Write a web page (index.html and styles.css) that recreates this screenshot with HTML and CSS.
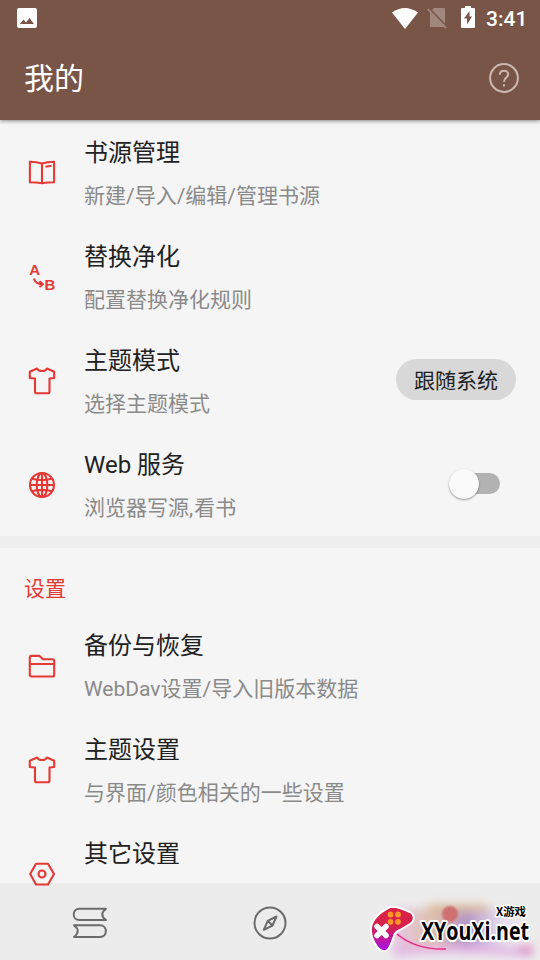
FILE: index.html
```html
<!DOCTYPE html>
<html lang="zh-CN">
<head>
<meta charset="utf-8">
<title>我的</title>
<link rel="stylesheet" href="styles.css">
</head>
<body>
<svg class="defs" width="0" height="0">
  <symbol id="shirt" viewBox="0 0 28 28"><path d="M9 1.500C10.500 4.800 17.500 4.800 19 1.500L26.200 4.800V11L21.500 11.500V24.500Q21.500 26.300 19.700 26.300H8.800Q7 26.300 7 24.500V11.500L1.800 11V4.800Z"/></symbol>
</svg>
<div class="screen">
  <header class="header">
    <div class="status">
      <svg class="photo" width="20" height="20" viewBox="0 0 20 20"><path fill="#fff" fill-rule="evenodd" d="M2 0H18Q20 0 20 2V18Q20 20 18 20H2Q0 20 0 18V2Q0 0 2 0ZM3 16H17L12.500 10L9 14.500L6.500 11.500Z"/></svg>
      <div class="signals">
        <svg width="26" height="21" viewBox="0 0 26 21"><path fill="#fff" d="M0 4.500Q13-4.500 26 4.500L13 21Z"/></svg>
        <svg class="sim" width="20" height="21" viewBox="0 0 20 21"><path fill="#a1887f" d="M7 0H17Q18 0 18 1V15.500L5 2ZM3 4L17.500 19H4Q3 19 3 18Z"/><path d="M.8 1.200L19 20" stroke="#a1887f" stroke-width="1.800"/></svg>
        <svg class="battery" width="14" height="22" viewBox="0 0 14 22"><path fill="#fff" fill-rule="evenodd" d="M4 0H10V2H13Q14 2 14 3V21Q14 22 13 22H1Q0 22 0 21V3Q0 2 1 2H4ZM8.500 5L3 12.500H6V18.500L11 10.500H8.500Z"/></svg>
        <span class="clock">3:41</span>
      </div>
    </div>
    <div class="toolbar">
      <h1>我的</h1>
      <svg width="30" height="30" viewBox="0 0 30 30" fill="none" stroke="#cdb9b1" stroke-width="2"><circle cx="15" cy="15" r="13.900"/><path d="M10.800 11.800C10.800 6.300 19.200 6.300 19.200 11.500C19.200 14.500 15 14.800 15 18.800"/><path d="M15 21.200V23.400"/></svg>
    </div>
  </header>
  <main class="content">
    <div class="row">
      <svg class="icon" viewBox="0 0 28 28"><path d="M14 4.500Q9 2.800 1.900 2.800V23.200Q9 23.200 14 24.200Q19 23.200 26.100 23.200V2.800Q19 2.800 14 4.500V24M17.500 7.800L23.500 6.800"/></svg>
      <div class="copy"><div class="title">书源管理</div><div class="sub">新建/导入/编辑/管理书源</div></div>
    </div>
    <div class="row">
      <svg class="icon letters" viewBox="0 0 28 28"><text x="1.300" y="12">A</text><text x="16.500" y="26.500">B</text><path d="M5.800 15.500Q7.500 21 14 21.200M11.500 18.300L15 21.200L11.500 24"/></svg>
      <div class="copy"><div class="title">替换净化</div><div class="sub">配置替换净化规则</div></div>
    </div>
    <div class="row">
      <svg class="icon"><use href="#shirt"/></svg>
      <div class="copy"><div class="title">主题模式</div><div class="sub">选择主题模式</div></div>
      <div class="chip">跟随系统</div>
    </div>
    <div class="row">
      <svg class="icon" viewBox="0 0 28 28"><circle cx="14" cy="14" r="12"/><ellipse cx="14" cy="14" rx="5.300" ry="12"/><path d="M14 2V26M2 14H26M4 7.800Q14 10.500 24 7.800M4 20.200Q14 17.500 24 20.200"/></svg>
      <div class="copy"><div class="title">Web 服务</div><div class="sub">浏览器写源<span class="comma">,</span>看书</div></div>
      <div class="switch"><div class="thumb"></div></div>
    </div>
    <div class="divider"></div>
    <h2>设置</h2>
    <div class="row">
      <svg class="icon" viewBox="0 0 28 28"><path d="M3.500 3.900H11.500L15 7.300H24.500Q26.200 7.300 26.200 9V22.700Q26.200 24.500 24.500 24.500H3.500Q1.800 24.500 1.800 22.700V5.600Q1.800 3.900 3.500 3.900ZM2 12H26"/></svg>
      <div class="copy"><div class="title">备份与恢复</div><div class="sub">WebDav设置/导入旧版本数据</div></div>
    </div>
    <div class="row">
      <svg class="icon"><use href="#shirt"/></svg>
      <div class="copy"><div class="title">主题设置</div><div class="sub">与界面/颜色相关的一些设置</div></div>
    </div>
    <div class="row">
      <svg class="icon" viewBox="0 0 28 28"><path d="M8 3.700H20L26 14L20 24.500H8L2.200 14Z"/><circle cx="14" cy="14" r="3.500"/></svg>
      <div class="copy"><div class="title">其它设置</div><div class="sub"></div></div>
    </div>
  </main>
  <nav class="nav">
    <svg width="36" height="34" viewBox="0 0 36 34"><path d="M34 2.800H7.500C-.2 2.800-.2 14 7.500 14H34Q26.500 8.500 34 2.800ZM2 19.200H28C35.800 19.200 35.800 31 28 31H2Q9.500 25 2 19.200Z"/></svg>
    <svg width="36" height="36" viewBox="0 0 36 36"><circle cx="18" cy="18" r="15.500"/><path d="M24.500 11.500L20.500 20.500L11.800 24.800L15.700 15.800ZM16 16L20.300 20.300"/></svg>
    <span class="blank"></span>
  </nav>
  <svg class="mark" width="190" height="77" viewBox="350 883 190 77">
    <defs>
      <filter id="soft" x="-30%" y="-60%" width="160%" height="220%"><feGaussianBlur stdDeviation="5"/></filter>
      <filter id="edge" x="-30%" y="-60%" width="160%" height="220%"><feGaussianBlur stdDeviation="1"/></filter>
      <linearGradient id="pad" x2="0" y2="1"><stop stop-color="#db2343"/><stop offset=".45" stop-color="#d7204d"/><stop offset="1" stop-color="#a80df0"/></linearGradient>
      <linearGradient id="glow"><stop stop-color="#e5c6ec"/><stop offset=".3" stop-color="#dfc1ab"/><stop offset=".55" stop-color="#b395c9"/><stop offset=".8" stop-color="#e6dcee"/><stop offset="1" stop-color="#eeeaf0"/></linearGradient>
    </defs>
    <g filter="url(#soft)">
      <path fill="url(#glow)" d="M392 909H520L528 953H393Z"/>
      <path d="M393 953Q440 946 532 953" fill="none" stroke="#e3b4e5" stroke-width="8"/>
      <path d="M428 908H488" stroke="#dcb992" stroke-width="7"/>
      <ellipse cx="526" cy="949" rx="8" ry="4" fill="#df82bd"/>
    </g>
    <circle cx="450" cy="914" r="8" fill="#ce706f" filter="url(#edge)"/>
    <path d="M397 934Q416 950 446 949" fill="none" stroke="#f5b7d6" stroke-width="4"/><path d="M397 934Q416 950 446 949" fill="none" stroke="#d83188" stroke-width="1.600"/>
    <path fill="url(#pad)" stroke="#fff" stroke-width="2" d="M390 907H396Q404 909 410 912C415 915 415 921 410 924L400 930Q395 932 394 936L391 944C389 949 386 952 383 951C377 950 370 937 371 928C372 918 382 911 390 907Z"/>
    <path d="M377 926.500L386 935.500M386 926.500L377 935.500" stroke="#fff" stroke-width="5.500" stroke-linecap="round"/>
    <g fill="#ff9629"><circle cx="390.500" cy="914.500" r="2.900"/><circle cx="398" cy="914.500" r="2.900"/><circle cx="390.500" cy="921.800" r="2.900"/><circle cx="398" cy="921.800" r="2.900"/></g>
    <text class="brand" x="421" y="940" textLength="108" lengthAdjust="spacingAndGlyphs">XYouXi.net</text>
    <text class="tag" x="496" y="916" textLength="30" lengthAdjust="spacingAndGlyphs">X游戏</text>
  </svg>
</div>
</body>
</html>
```

FILE: styles.css
```css
* { box-sizing: border-box; }
body { margin: 0; font-family: Roboto, "Noto Sans CJK SC", sans-serif; }
.defs { position: absolute; }
.screen { position: relative; width: 540px; height: 960px; overflow: hidden; display: flex; flex-direction: column; background: #f5f5f5; }
.header { height: 120px; flex: none; background: #795548; box-shadow: 0 1px 4px rgba(0,0,0,.45); z-index: 2; }
.status { height: 36px; padding: 0 13px 0 17px; display: flex; justify-content: space-between; align-items: center; }
.signals { display: flex; align-items: center; }
.sim { margin-left: 9px; }
.battery { margin-left: 14px; margin-top: -2px; }
.clock { width: 42px; margin-left: 11px; margin-right: -1px; color: #fff; font-size: 21px; font-weight: 500; line-height: 36px; white-space: nowrap; padding-top: 1px; }
.toolbar { height: 84px; display: flex; justify-content: space-between; align-items: center; padding: 0 21px 0 24px; }
h1 { margin: 0; padding-top: 2px; color: #fff; font-size: 30px; font-weight: 400; line-height: 44px; }
.content { flex: 1; min-height: 0; z-index: 1; }
.row { height: 104px; display: flex; align-items: center; padding: 0 24px 0 28px; }
.icon { width: 28px; height: 28px; flex: none; margin-top: 2px; overflow: visible; fill: none; stroke: #e53935; stroke-width: 2.1; stroke-linejoin: round; }
.letters text { fill: #e53935; stroke: none; font: bold 15px "Liberation Sans", sans-serif; }
.copy { flex: 1; margin-left: 28px; padding-top: 4px; }
.title { height: 44px; line-height: 44px; font-size: 24px; color: #212121; white-space: nowrap; }
.sub { height: 42px; line-height: 42px; font-size: 21px; color: #8a8a8a; white-space: nowrap; }
.comma { padding-right: 1px; }
.chip { width: 120px; height: 41px; margin-top: -1px; border-radius: 21px; background: #d8d8d8; color: #212121; font-size: 21px; line-height: 45px; text-align: center; }
.switch { width: 49px; height: 21px; margin: -1px 16px 0 0; border-radius: 11px; background: #b2b2b2; display: flex; align-items: center; }
.thumb { width: 30px; height: 30px; margin-left: -2px; flex: none; border-radius: 50%; background: #fafafa; box-shadow: 0 1px 2px rgba(0,0,0,.4); }
.divider { height: 12px; background: #eee; }
h2 { height: 65px; margin: 0; padding: 8px 24px 0; color: #e53935; font-size: 21px; font-weight: 400; line-height: 66px; }
.nav { height: 77px; flex: none; background: #ececec; display: grid; grid-template-columns: repeat(3, 1fr); place-items: center; padding-top: 3px; }
.nav svg { fill: none; stroke: #6b6b6b; stroke-width: 2; stroke-linejoin: round; }
.mark { position: absolute; right: 0; bottom: 0; z-index: 2; }
.brand, .tag { fill: #000; stroke: #fff; stroke-width: 4px; paint-order: stroke; stroke-linejoin: round; font-weight: 700; }
.brand { font-family: "Open Sans", "Noto Sans", sans-serif; font-size: 25px; }
.tag { font-family: "Noto Sans CJK SC", sans-serif; font-size: 11.5px; stroke-width: 3px; }
```
